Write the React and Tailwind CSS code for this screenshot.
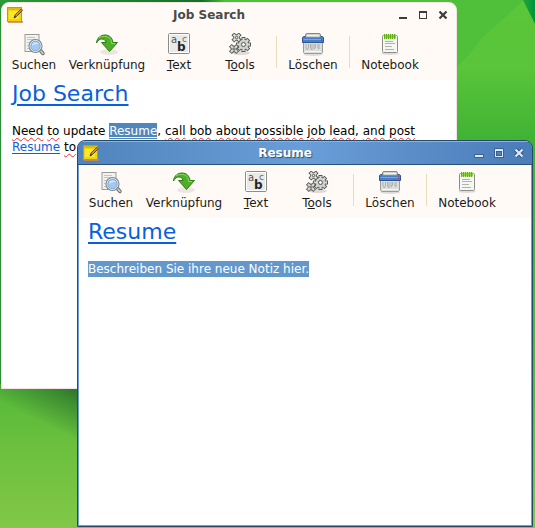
import React from "react";

function NoteIcon() {
  return (
    <svg width="17" height="17" viewBox="0 0 17 17" aria-hidden="true">
      <rect x="1" y="14" width="15" height="2" fill="#c98a5a" opacity=".8" />
      <rect x="0.5" y="0.5" width="14" height="14" fill="#f0d40c" stroke="#c99a04" />
      <path d="M1 1h13v2H1z" fill="#dcbc08" />
      <path d="M2 4h10v8H2z" fill="#fbe62e" />
      <path d="M7 11l1-3 6-6 1.500 1.500-6 6z" fill="#c9923e" stroke="#3d3212" strokeWidth=".8" />
      <path d="M7 11l1-2 1 1z" fill="#222" />
      <path d="M13 3l1.500 1.500L16 3l-1.500-1.500z" fill="#a8754a" />
    </svg>
  );
}

function SearchIcon() {
  return (
    <svg width="24" height="24" viewBox="0 0 24 24" aria-hidden="true">
      <rect x="3" y="1.500" width="14" height="17" fill="#f2f2f0" stroke="#9a9c98" />
      <path d="M5 4.500h8M5 6.500h9M5 9.500h3M5 12.500h2M5 15.500h2" stroke="#c4c6c2" />
      <path d="M18 17l3 3.500" stroke="#6c6e6a" strokeWidth="3.500" strokeLinecap="round" />
      <path d="M18 17l3 3.500" stroke="#d5d7d3" strokeWidth="1.500" strokeLinecap="round" />
      <circle cx="13.500" cy="13" r="6.500" fill="#a5c8ec" stroke="#858886" strokeWidth="1.200" />
      <circle cx="13.500" cy="13" r="5.400" fill="none" stroke="#e6eef7" />
      <circle cx="13.500" cy="13" r="4.700" fill="none" stroke="#6d9cd2" strokeWidth=".7" />
      <path d="M10 13c0-2.500 1.500-3.500 3.500-3.500 1.500 0 2.500 .5 3 1.500-2.500 0-4.500 0-6.500 2z" fill="#d9e9f8" />
    </svg>
  );
}

function LinkIcon() {
  return (
    <svg width="24" height="24" viewBox="0 0 24 24" aria-hidden="true">
      <ellipse cx="14" cy="19" rx="9" ry="3" fill="#000" opacity=".08" />
      <path
        d="M1.500 10C2 4.500 6 2 10 2c4.500 0 7.500 3 8 7.500H22.500l-8 9-8-9h4.500C10.500 7 9 6 6.500 6 4.500 6 3 7.500 1.500 10z"
        fill="#4fae28"
        stroke="#2f7d16"
      />
      <path d="M4 5C6 3 12 2.500 15 5.500c1 1.500 1.500 3 1.500 5H20" fill="none" stroke="#8fd863" />
    </svg>
  );
}

function TextIcon() {
  return (
    <svg width="24" height="24" viewBox="0 0 24 24" aria-hidden="true">
      <rect x="1.500" y="0.500" width="21" height="20" rx="1.500" fill="#e9e9e7" stroke="#8a8c88" />
      <rect x="2.500" y="1.500" width="19" height="18" fill="none" stroke="#fff" />
      <text x="4" y="10" fontFamily="DejaVu Sans" fontSize="10" fill="#555">a</text>
      <text x="15" y="9" fontFamily="DejaVu Sans" fontSize="9" fill="#666">c</text>
      <text x="10" y="18" fontFamily="DejaVu Sans" fontSize="12" fontWeight="bold" fill="#22262a">b</text>
    </svg>
  );
}

function Gear({ x, y, r, teeth }) {
  const angles = Array.from({ length: teeth }, (_, i) => (i * 360) / teeth + (teeth === 4 ? 45 : 0));
  return (
    <g transform={`translate(${x} ${y})`}>
      {angles.map((a) => (
        <rect key={a} x="-1.500" y={-r - 1.500} width="3" height="3" transform={`rotate(${a})`} fill="#e2e3e0" stroke="#555854" strokeWidth="1" />
      ))}
      <circle r={r - 0.3} fill="#cccdca" stroke="#555854" strokeWidth="1" />
      {angles.map((a) => (
        <rect key={a} x="-1" y={-r - 0.8} width="2" height="2.500" transform={`rotate(${a})`} fill="#dcddda" />
      ))}
      <circle r={r * 0.36} fill="#fbf8f4" stroke="#555854" />
    </g>
  );
}

function ToolsIcon() {
  return (
    <svg width="24" height="24" viewBox="0 0 24 24" aria-hidden="true">
      <ellipse cx="13" cy="20" rx="9" ry="2" fill="#000" opacity=".12" />
      <Gear x={15.500} y={11.500} r={5.500} teeth={8} />
      <Gear x={8.500} y={4.500} r={3.200} teeth={4} />
      <Gear x={6} y={16} r={3.200} teeth={4} />
    </svg>
  );
}

function ShredderIcon() {
  return (
    <svg width="24" height="24" viewBox="0 0 24 24" aria-hidden="true">
      <ellipse cx="12" cy="21.500" rx="10" ry="1.500" fill="#000" opacity=".12" />
      <path d="M2.500 9h19v10.500l-1 1h-17l-1-1z" fill="#dcdedb" stroke="#9a9c98" />
      <path d="M5 11v4l1.500 2 1-3V11M9.500 11v4l1.500 2v-6M13 11v5l1.500-2v-3M17 11v4l1 1v-5" fill="none" stroke="#aeb0ac" />
      <path d="M4 18.500h16" stroke="#f5f5f4" />
      <path d="M1.500 4.500l1-1h19l1 1v5h-21z" fill="#4a7ec6" stroke="#2a5596" />
      <path d="M2.500 6.500h19" stroke="#7ba5dd" />
      <rect x="4.500" y="0.500" width="15" height="4" rx="1.500" fill="#cfd1cd" stroke="#858884" />
      <path d="M6 2.500h12" stroke="#f1f1ef" />
      <rect x="20" y="6" width="1" height="2" fill="#ef2929" />
    </svg>
  );
}

function NotebookIcon() {
  return (
    <svg width="24" height="24" viewBox="0 0 24 24" aria-hidden="true">
      <ellipse cx="12" cy="20.500" rx="9" ry="1.500" fill="#000" opacity=".12" />
      <rect x="4.500" y="2.500" width="15" height="17" rx="1" fill="#f6f7f5" stroke="#8b8e89" />
      <path d="M6 1.500h12v4H6z" fill="#8ad632" />
      <path d="M6.500 1v5M8.500 1v5M10.500 1v5M12.500 1v5M14.500 1v5M16.500 1v5" stroke="#62b018" />
      <path d="M7 8.500h8M7 10.500h10M7 13.500h7M7 16.500h9" stroke="#b0b2ae" />
    </svg>
  );
}

function ToolButton({ icon, children }) {
  return (
    <button type="button" className="flex flex-col items-center whitespace-nowrap text-xs leading-4 text-[#1a1a1a]">
      {icon}
      <span>{children}</span>
    </button>
  );
}

function Separator() {
  return <div className="mt-[3px] h-8 w-px justify-self-center bg-[#e6dcb8]" />;
}

function Toolbar() {
  return (
    <div className="grid grid-cols-[60px_86px_58px_64px_8px_66px_6px_76px] bg-[#fffaf6] pt-[6px] pb-[7px] pl-[2px]">
      <ToolButton icon={<SearchIcon />}>Suchen</ToolButton>
      <ToolButton icon={<LinkIcon />}>Verknüpfung</ToolButton>
      <ToolButton icon={<TextIcon />}>
        <u>T</u>ext
      </ToolButton>
      <ToolButton icon={<ToolsIcon />}>
        T<u>o</u>ols
      </ToolButton>
      <Separator />
      <ToolButton icon={<ShredderIcon />}>Löschen</ToolButton>
      <Separator />
      <ToolButton icon={<NotebookIcon />}>Notebook</ToolButton>
    </div>
  );
}

function WindowControls({ active }) {
  const fill = active ? "#dfe9f6" : "#3c3c3c";
  const edge = active ? "#31568a" : "none";
  return (
    <div className="flex items-center gap-1">
      <button type="button" aria-label="Minimieren">
        <svg width="16" height="16" viewBox="0 0 16 16">
          <rect x="4" y="10" width="8" height="2" fill={fill} stroke={edge} strokeWidth="1.500" paintOrder="stroke" />
        </svg>
      </button>
      <button type="button" aria-label="Maximieren">
        <svg width="16" height="16" viewBox="0 0 16 16">
          <path d="M4 4h8v8H4zM5 6v5h6V6z" fillRule="evenodd" fill={fill} stroke={edge} strokeWidth="1.500" paintOrder="stroke" />
        </svg>
      </button>
      <button type="button" aria-label="Schließen">
        <svg width="16" height="16" viewBox="0 0 16 16">
          <path d="M4.500 4.500l7 7M11.500 4.500l-7 7" stroke={edge} strokeWidth="4" />
          <path d="M4.500 4.500l7 7M11.500 4.500l-7 7" stroke={fill} strokeWidth="2.200" />
        </svg>
      </button>
    </div>
  );
}

function Spell({ children }) {
  return (
    <span className="underline decoration-[#f03030] decoration-wavy decoration-1 underline-offset-2">{children}</span>
  );
}

function NoteTitle({ children }) {
  return (
    <h2 className="mb-[15px] text-[22px] leading-7 text-[#0a5fdc] underline decoration-2 underline-offset-3">
      {children}
    </h2>
  );
}

function BackWindow() {
  return (
    <section className="absolute top-[2px] left-px flex h-[387px] w-[456px] flex-col overflow-hidden rounded-t-lg border border-[#f1e4e2] bg-[#fffaf6]">
      <header className="grid h-6 shrink-0 grid-cols-[40px_1fr_59px] items-center pr-[2px] pl-[5px]">
        <NoteIcon />
        <h1 className="pr-6 text-center text-xs font-bold text-[#4a4a4a]">Job Search</h1>
        <WindowControls active={false} />
      </header>
      <Toolbar />
      <div role="textbox" aria-label="Job Search" className="grow bg-white px-[10px] text-xs leading-4 text-black">
        <NoteTitle>Job Search</NoteTitle>
        <p>
          <Spell>Need</Spell> <Spell>to</Spell> update{" "}
          <a href="#resume" className="bg-[#4f87bd] py-px text-white underline underline-offset-2">Resume</a>, <Spell>call</Spell>{" "}
          <Spell>bob</Spell> <Spell>about</Spell> <Spell>possible</Spell> <Spell>job</Spell> <Spell>lead</Spell>,{" "}
          <Spell>and</Spell> <Spell>post</Spell>
          <br />
          <a href="#resume" className="text-[#0a5fdc] underline underline-offset-2">Resume</a> <Spell>to</Spell>
        </p>
      </div>
    </section>
  );
}

function FrontWindow() {
  return (
    <section
      id="resume"
      className="absolute top-[140px] left-[77px] flex h-[387px] w-[456px] flex-col overflow-hidden rounded-t-lg border border-[#244a6c] bg-[#6f9fd2] px-px pb-px"
    >
      <header className="-mx-px grid h-6 shrink-0 grid-cols-[40px_1fr_59px] items-center border-t border-b border-t-[#8db3dd] border-b-[#2c5078] bg-linear-to-r from-[#4f84bc] via-[#6a9ed8] to-[#4a7cb8] pr-[2px] pl-[5px]">
        <NoteIcon />
        <h1 className="pr-6 text-center text-xs font-bold text-white [text-shadow:1px_1px_1px_#2c5078]">Resume</h1>
        <WindowControls active />
      </header>
      <Toolbar />
      <div role="textbox" aria-label="Resume" className="grow bg-white px-[9px] text-xs leading-4">
        <NoteTitle>Resume</NoteTitle>
        <p>
          <span className="bg-[#6398cd] py-px text-white">Beschreiben Sie ihre neue Notiz hier.</span>
        </p>
      </div>
    </section>
  );
}

function Wallpaper() {
  return (
    <svg className="absolute inset-0 h-full w-full" viewBox="0 0 535 528" preserveAspectRatio="none" aria-hidden="true">
      <defs>
        <linearGradient id="base" x1="0" y1="0" x2="0" y2="1">
          <stop offset="0" stopColor="#5cc63a" />
          <stop offset=".13" stopColor="#5ac43a" />
          <stop offset=".27" stopColor="#3fb234" />
          <stop offset=".6" stopColor="#4fb43a" />
          <stop offset=".74" stopColor="#58ba3a" />
          <stop offset=".85" stopColor="#6cc03e" />
          <stop offset="1" stopColor="#82c748" />
        </linearGradient>
        <linearGradient id="top" x1="0" x2="1">
          <stop offset="0" stopColor="#2b9a38" />
          <stop offset=".45" stopColor="#157028" />
          <stop offset=".5" stopColor="#4fc03a" />
          <stop offset="1" stopColor="#4fc03a" />
        </linearGradient>
        <linearGradient id="shade" gradientUnits="userSpaceOnUse" x1="82" y1="388" x2="60" y2="432">
          <stop offset="0" stopColor="#2a6f2a" />
          <stop offset=".35" stopColor="#2a6f2a" stopOpacity=".6" />
          <stop offset="1" stopColor="#2a6f2a" stopOpacity="0" />
        </linearGradient>
        <linearGradient id="corner" x1="0" x2="1">
          <stop offset="0" stopColor="#1fa63a" />
          <stop offset="1" stopColor="#00963c" />
        </linearGradient>
      </defs>
      <rect width="535" height="528" fill="url(#base)" />
      <rect width="450" height="10" fill="url(#top)" />
      <rect width="2" height="380" y="4" fill="#2c9038" />
      <path d="M450 0h74l-42 38-14 18-18 18z" fill="#50c03a" />
      <path d="M535 0v24L523 0z" fill="url(#corner)" />
      <rect y="380" width="82" height="80" fill="url(#shade)" />
    </svg>
  );
}

export default function App() {
  return (
    <main className="relative min-h-screen overflow-hidden bg-[#5cbc3c] font-['DejaVu_Sans',sans-serif]">
      <Wallpaper />
      <BackWindow />
      <FrontWindow />
    </main>
  );
}
